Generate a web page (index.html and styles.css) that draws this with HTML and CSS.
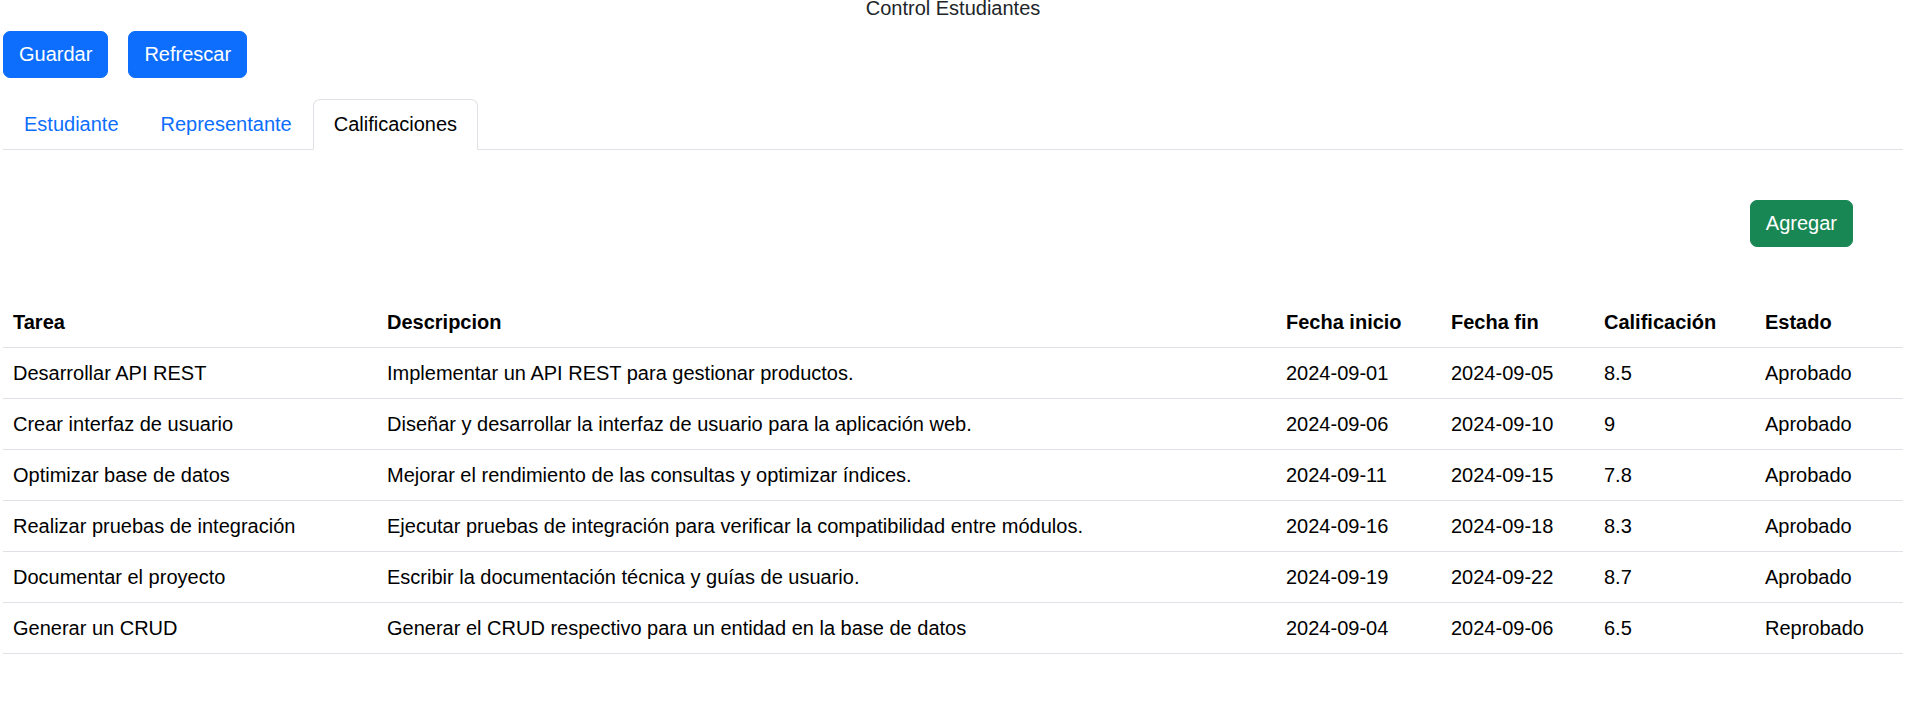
FILE: index.html
```html
<!DOCTYPE html>
<html lang="es">
<head>
<meta charset="utf-8">
<title>Control Estudiantes</title>
<link rel="stylesheet" href="styles.css">
</head>
<body>
<div class="page">
  <div class="title">Control Estudiantes</div>
  <div class="actions">
    <button class="btn btn-primary">Guardar</button>
    <button class="btn btn-primary">Refrescar</button>
  </div>
  <ul class="tabs">
    <li><a class="tab-link">Estudiante</a></li>
    <li><a class="tab-link">Representante</a></li>
    <li><a class="tab-link active">Calificaciones</a></li>
  </ul>
  <div class="tab-pane">
    <div class="toolbar">
      <button class="btn btn-success">Agregar</button>
    </div>
    <table class="grades">
      <colgroup>
        <col class="c-task">
        <col class="c-desc">
        <col class="c-start">
        <col class="c-end">
        <col class="c-grade">
        <col class="c-state">
      </colgroup>
      <thead>
        <tr><th>Tarea</th><th>Descripcion</th><th>Fecha inicio</th><th>Fecha fin</th><th>Calificación</th><th>Estado</th></tr>
      </thead>
      <tbody>
        <tr><td>Desarrollar API REST</td><td>Implementar un API REST para gestionar productos.</td><td>2024-09-01</td><td>2024-09-05</td><td>8.5</td><td>Aprobado</td></tr>
        <tr><td>Crear interfaz de usuario</td><td>Diseñar y desarrollar la interfaz de usuario para la aplicación web.</td><td>2024-09-06</td><td>2024-09-10</td><td>9</td><td>Aprobado</td></tr>
        <tr><td>Optimizar base de datos</td><td>Mejorar el rendimiento de las consultas y optimizar índices.</td><td>2024-09-11</td><td>2024-09-15</td><td>7.8</td><td>Aprobado</td></tr>
        <tr><td>Realizar pruebas de integración</td><td>Ejecutar pruebas de integración para verificar la compatibilidad entre módulos.</td><td>2024-09-16</td><td>2024-09-18</td><td>8.3</td><td>Aprobado</td></tr>
        <tr><td>Documentar el proyecto</td><td>Escribir la documentación técnica y guías de usuario.</td><td>2024-09-19</td><td>2024-09-22</td><td>8.7</td><td>Aprobado</td></tr>
        <tr><td>Generar un CRUD</td><td>Generar el CRUD respectivo para un entidad en la base de datos</td><td>2024-09-04</td><td>2024-09-06</td><td>6.5</td><td>Reprobado</td></tr>
      </tbody>
    </table>
  </div>
</div>
</body>
</html>
```

FILE: styles.css
```css
* { box-sizing: border-box; }
html, body { margin: 0; padding: 0; background: #fff; }
body {
  font-family: "Liberation Sans", Arial, sans-serif;
  font-size: 20px;
  line-height: 30px;
  color: #212529;
  overflow: hidden;
}
.page {
  width: 1903px;
  padding-left: 3px;
}
.title {
  text-align: center;
  margin-top: -7px;
  height: 30px;
  color: #212529;
}
.actions {
  display: flex;
  gap: 20px;
  margin-top: 8px;
}
.btn {
  font-family: inherit;
  font-size: 20px;
  line-height: 30px;
  padding: 7px 15px 8px;
  border: 1px solid transparent;
  border-radius: 7px;
  color: #fff;
  cursor: pointer;
}
.btn-primary { background: #0d6efd; border-color: #0d6efd; }
.btn-success { background: #198754; border-color: #198754; }
.tabs {
  list-style: none;
  margin: 21px 0 0;
  padding: 0;
  display: flex;
  border-bottom: 1px solid #dee2e6;
}
.tabs li { margin-bottom: -1px; }
.tab-link {
  display: block;
  padding: 9px 20px 10px;
  border: 1px solid transparent;
  border-radius: 7px 7px 0 0;
  color: #0d6efd;
  text-decoration: none;
}
.tab-link.active {
  color: #000;
  background: #fff;
  border-color: #dee2e6 #dee2e6 #fff;
}
.toolbar {
  display: flex;
  justify-content: flex-end;
  padding-right: 50px;
  margin-top: 50px;
}
.grades {
  margin-top: 50px;
  width: 1900px;
  border-collapse: collapse;
  table-layout: fixed;
  color: #000;
}
.c-task { width: 374px; }
.c-desc { width: 899px; }
.c-start { width: 165px; }
.c-end { width: 153px; }
.c-grade { width: 161px; }
.c-state { width: 148px; }
.grades th, .grades td {
  text-align: left;
  padding: 10px;
  border-bottom: 1px solid #dee2e6;
  white-space: nowrap;
  overflow: hidden;
}
.grades th { font-weight: 700; }
```
